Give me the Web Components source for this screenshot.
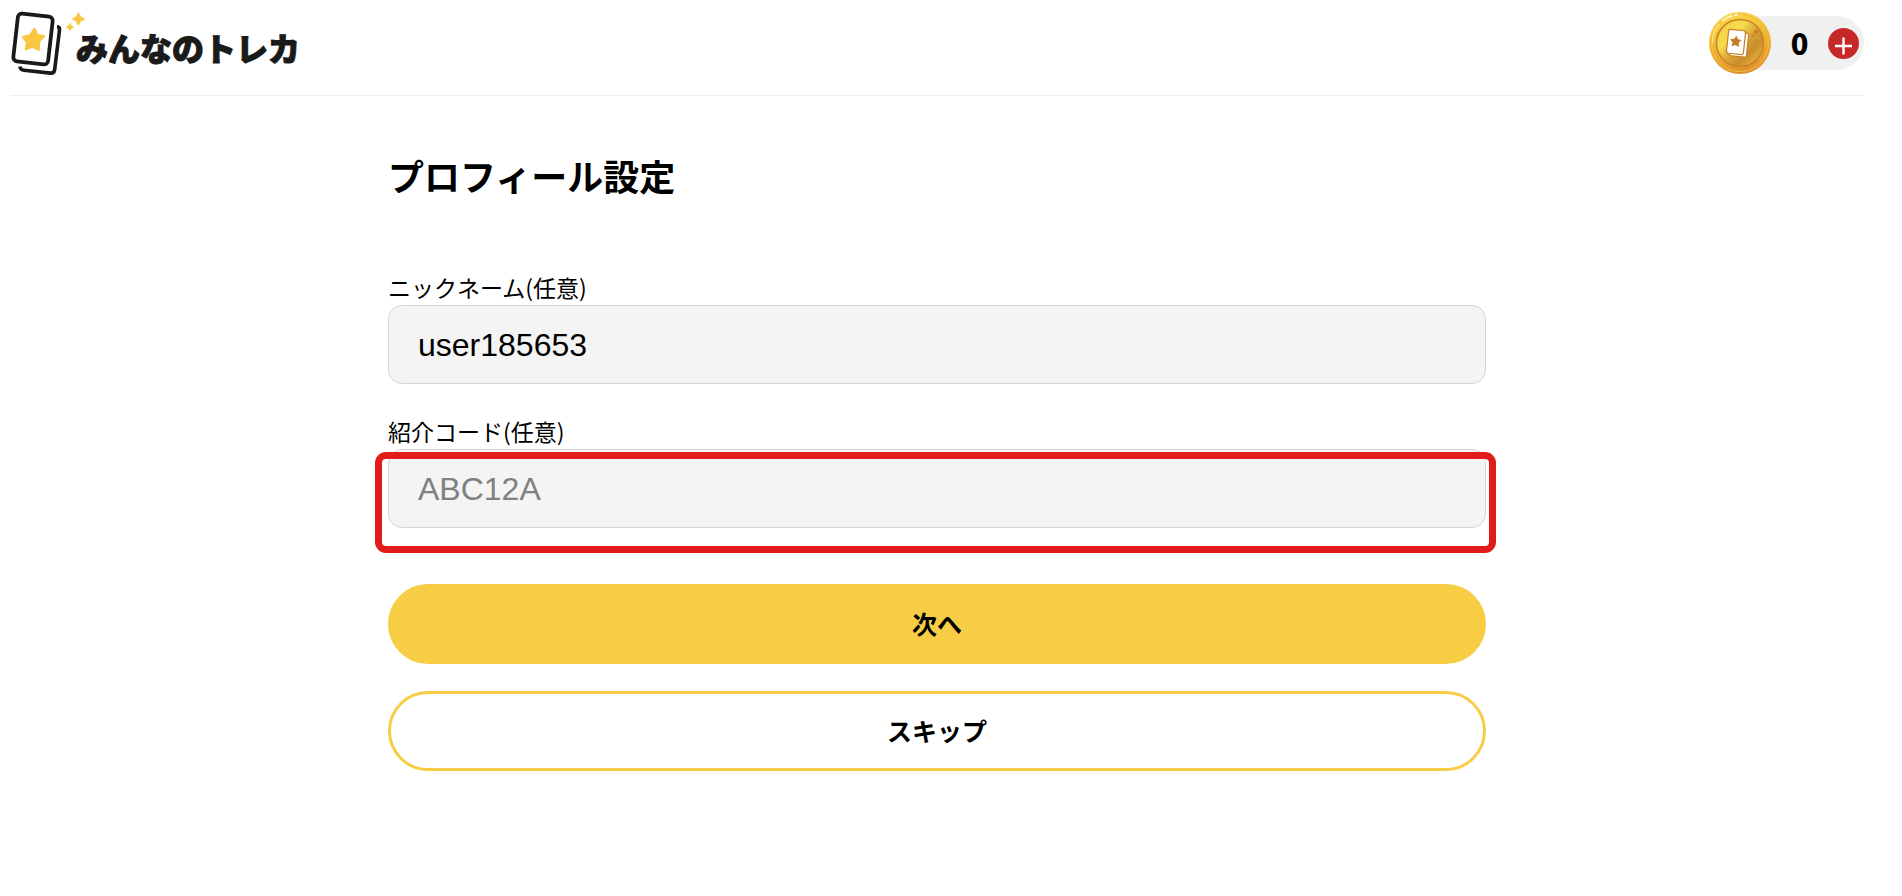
<!DOCTYPE html>
<html lang="ja">
<head>
<meta charset="UTF-8">
<meta name="viewport" content="width=device-width, initial-scale=1">
<title>プロフィール設定 | みんなのトレカ</title>
<style>
  body {
    margin: 0;
    background: #fff;
    color: #000;
    font-family: 'Liberation Sans', 'Noto Sans CJK JP', sans-serif;
  }
</style>
</head>
<body>
<app-page>
  <app-header slot="header">
    <site-logo>みんなのトレカ</site-logo>
    <coin-balance slot="actions" amount="0"></coin-balance>
  </app-header>
  <profile-form heading="プロフィール設定">
    <text-field label="ニックネーム(任意)" name="nickname" value="user185653"></text-field>
    <text-field label="紹介コード(任意)" name="code" placeholder="ABC12A" highlight></text-field>
    <pill-button slot="actions" variant="primary">次へ</pill-button>
    <pill-button slot="actions" variant="outline">スキップ</pill-button>
  </profile-form>
</app-page>

<script>
class AppPage extends HTMLElement {
  constructor() {
    super();
    this.attachShadow({ mode: 'open' });
    this.shadowRoot.innerHTML = `
      <style>
        :host {
          display: block;
          padding: 0 38px 0 10px;
        }
        main {
          max-width: 1098px;
          margin: 0 auto;
          padding: 55px 0 64px;
        }
      </style>
      <slot name="header"></slot>
      <main><slot></slot></main>
    `;
  }
}

class AppHeader extends HTMLElement {
  constructor() {
    super();
    this.attachShadow({ mode: 'open' });
    this.shadowRoot.innerHTML = `
      <style>
        :host {
          display: block;
        }
        header {
          display: flex;
          justify-content: space-between;
          align-items: center;
          padding: 10px 0 19px;
          border-bottom: 1px solid #eee;
        }
      </style>
      <header>
        <slot></slot>
        <slot name="actions"></slot>
      </header>
    `;
  }
}

class SiteLogo extends HTMLElement {
  constructor() {
    super();
    this.attachShadow({ mode: 'open' });
    this.shadowRoot.innerHTML = `
      <style>
        :host {
          display: block;
        }
        a {
          display: flex;
          align-items: center;
          color: #1a1a1a;
          text-decoration: none;
        }
        svg {
          display: block;
          width: 66px;
          height: 66px;
          overflow: visible;
        }
        span {
          padding-top: 8px;
          font-family: 'Noto Sans CJK JP', sans-serif;
          font-size: 32px;
          font-weight: 900;
          line-height: 40px;
          white-space: nowrap;
          -webkit-text-stroke: 1px #1a1a1a;
          text-shadow: 0 0 2px #ddd;
        }
      </style>
      <a href="#">
        <svg viewBox="11 10 66 66" aria-hidden="true">
          <path d="M58 26.5Q61 27 60.500 30L55.700 69.500Q55.200 73.500 51.500 73.100L25 70.300Q21.500 70 20.800 66.500" fill="none" stroke="#1a1a1a" stroke-width="3.600"/>
          <rect x="16.500" y="15" width="35" height="48" rx="4" transform="rotate(6.500 34 39)" fill="#fff" stroke="#1a1a1a" stroke-width="3.800"/>
          <path d="M35.500 29L38.300 35.200L45 36.200L40.200 41.200L39.600 49.800L33.500 46.700L26.800 49.200L28.200 42.200L24 37.200L31 35.500Z" fill="#f7c744" stroke="#f7c744" stroke-width="2.400" stroke-linejoin="round"/>
          <path d="M79.500 12.500Q80.800 17.700 86 19Q80.800 20.300 79.500 25.500Q78.200 20.300 73 19Q78.200 17.700 79.500 12.500Z" fill="#f7c744" stroke="#f7c744" stroke-width="0.800"/>
          <path d="M71 23Q71.800 26.200 75 27Q71.800 27.800 71 31Q70.200 27.800 67 27Q70.200 26.200 71 23Z" fill="#f7c744" stroke="#f7c744" stroke-width="0.500"/>
        </svg>
        <span><slot></slot></span>
      </a>
    `;
  }
}

class CoinBalance extends HTMLElement {
  constructor() {
    super();
    this.attachShadow({ mode: 'open' });
    this.shadowRoot.innerHTML = `
      <style>
        :host {
          display: block;
        }
        .balance {
          display: flex;
          align-items: center;
          height: 54px;
          border-radius: 27px;
          background: #f0f0f0;
        }
        .coin {
          display: block;
          width: 62px;
          height: 62px;
        }
        .amount {
          min-width: 57px;
          text-align: center;
          font-family: 'Noto Sans CJK JP', sans-serif;
          font-size: 29px;
          font-weight: 900;
          line-height: 52px;
          padding-bottom: 2px;
        }
        button {
          width: 31px;
          height: 31px;
          margin-right: 5px;
          padding: 0;
          border: 0;
          border-radius: 50%;
          background: #c62828;
          cursor: pointer;
        }
        button svg {
          display: block;
          width: 31px;
          height: 31px;
        }
      </style>
      <div class="balance">
        <svg class="coin" viewBox="0 0 62 62" aria-hidden="true">
          <defs>
            <linearGradient id="rim" x1="0.300" y1="0" x2="0.600" y2="1">
              <stop offset="0" stop-color="#f9d84b"/>
              <stop offset="0.500" stop-color="#efb62f"/>
              <stop offset="1" stop-color="#df8c2f"/>
            </linearGradient>
            <linearGradient id="face" x1="0.100" y1="0.100" x2="0.900" y2="0.900">
              <stop offset="0" stop-color="#f5d044"/>
              <stop offset="0.300" stop-color="#f6dc4c"/>
              <stop offset="0.550" stop-color="#d8a238"/>
              <stop offset="0.750" stop-color="#c98d2c"/>
              <stop offset="1" stop-color="#e9b535"/>
            </linearGradient>
          </defs>
          <circle cx="31" cy="31" r="31" fill="url(#rim)"/>
          <circle cx="31" cy="31" r="28.500" fill="none" stroke="#f4bf3c" stroke-width="1"/>
          <path d="M3.500 31A28 28 0 0 1 10 12.500" fill="none" stroke="#fbe98b" stroke-width="1.200" stroke-linecap="round"/>
          <path d="M14 8.500Q18 5 23 4M26 3.200L28 3" fill="none" stroke="#fff3bd" stroke-width="2" stroke-linecap="round"/>
          <circle cx="31" cy="31" r="23.500" fill="url(#face)" stroke="#cc8528" stroke-width="1.600"/>
          <rect x="21.500" y="20.500" width="17" height="24" rx="2" transform="rotate(6 30 32.500)" fill="#fff" stroke="#c77c28" stroke-width="1"/>
          <rect x="18.500" y="18" width="17" height="24" rx="2" transform="rotate(6 27 30)" fill="#fff" stroke="#c77c28" stroke-width="1.200"/>
          <path d="M27.300 23.500L29 27.200L32.600 28L29.800 30.600L30 35L26.500 33L22.500 34.200L23.600 30.400L21 27.200L25.300 26.800Z" fill="#c77c28"/>
          <path d="M47 17.500Q47.500 19.500 49.500 20Q47.500 20.500 47 22.500Q46.500 20.500 44.500 20Q46.500 19.500 47 17.500Z" fill="#c77c28" stroke="#c77c28" stroke-width="0.500"/>
          <circle cx="43.500" cy="23.700" r="1.200" fill="#c77c28"/>
        </svg>
        <span class="amount"></span>
        <button type="button" aria-label="コインを追加">
          <svg viewBox="0 0 31 31" aria-hidden="true">
            <path d="M15.500 9.500V26.500M7 18H24" stroke="#fff" stroke-width="2.400"/>
          </svg>
        </button>
      </div>
    `;
  }

  connectedCallback() {
    this.shadowRoot.querySelector('.amount').textContent = this.getAttribute('amount');
  }
}

class ProfileForm extends HTMLElement {
  constructor() {
    super();
    this.attachShadow({ mode: 'open' });
    this.shadowRoot.innerHTML = `
      <style>
        :host {
          display: block;
        }
        h1 {
          margin: 0 0 74px;
          font-family: 'Noto Sans CJK JP', sans-serif;
          font-size: 36px;
          font-weight: 700;
          line-height: 48px;
        }
        form {
          display: grid;
          gap: 56px;
        }
        .fields {
          display: grid;
          gap: 33px;
        }
        .actions {
          display: grid;
          gap: 27px;
        }
      </style>
      <h1></h1>
      <form>
        <div class="fields"><slot></slot></div>
        <div class="actions"><slot name="actions"></slot></div>
      </form>
    `;
  }

  connectedCallback() {
    this.shadowRoot.querySelector('h1').textContent = this.getAttribute('heading');
  }
}

class TextField extends HTMLElement {
  constructor() {
    super();
    this.attachShadow({ mode: 'open' });
    this.shadowRoot.innerHTML = `
      <style>
        :host {
          display: block;
        }
        label {
          display: block;
          padding-bottom: 4px;
          font-family: 'Noto Sans CJK JP', sans-serif;
          font-size: 23px;
          line-height: 28px;
        }
        .box {
          position: relative;
        }
        input {
          display: block;
          box-sizing: border-box;
          width: 100%;
          height: 79px;
          padding: 2px 29px 0;
          border: 1px solid #d5d5d5;
          border-radius: 14px;
          background: #f4f4f4;
          color: #000;
          font-family: inherit;
          font-size: 32px;
        }
        input::placeholder {
          color: #808080;
          opacity: 1;
        }
        /* marker frame drawn over the box */
        :host([highlight]) .box::after {
          content: '';
          position: absolute;
          top: 3px;
          right: -10px;
          bottom: -25px;
          left: -13px;
          border: 7px solid #e21b1b;
          border-radius: 11px;
          pointer-events: none;
        }
      </style>
      <label for="field"></label>
      <div class="box"><input id="field" type="text"></div>
    `;
  }

  connectedCallback() {
    const input = this.shadowRoot.querySelector('input');
    this.shadowRoot.querySelector('label').textContent = this.getAttribute('label');
    input.name = this.getAttribute('name') || '';
    input.value = this.getAttribute('value') || '';
    input.placeholder = this.getAttribute('placeholder') || '';
  }
}

class PillButton extends HTMLElement {
  constructor() {
    super();
    this.attachShadow({ mode: 'open' });
    this.shadowRoot.innerHTML = `
      <style>
        :host {
          display: block;
        }
        button {
          display: block;
          box-sizing: border-box;
          width: 100%;
          height: 80px;
          padding: 0 0 2px;
          border: 3px solid #f7cd46;
          border-radius: 40px;
          background: #fff;
          color: #000;
          font-family: 'Noto Sans CJK JP', sans-serif;
          font-size: 25px;
          font-weight: 700;
          cursor: pointer;
        }
        :host([variant="primary"]) button {
          background: #f7cd46;
        }
      </style>
      <button type="button"><slot></slot></button>
    `;
  }
}

customElements.define('app-page', AppPage);
customElements.define('app-header', AppHeader);
customElements.define('site-logo', SiteLogo);
customElements.define('coin-balance', CoinBalance);
customElements.define('profile-form', ProfileForm);
customElements.define('text-field', TextField);
customElements.define('pill-button', PillButton);
</script>
</body>
</html>
